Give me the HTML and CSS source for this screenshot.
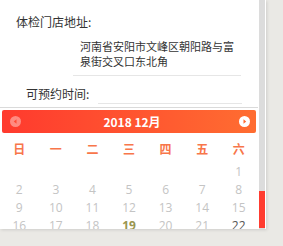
FILE: index.html
```html
<!DOCTYPE html>
<html lang="zh-CN">
<head>
<meta charset="utf-8">
<link rel="stylesheet" href="styles.css">
</head>
<body>
<div class="frame">
  <div class="content">
    <div class="label first">体检门店地址:</div>
    <div class="address">河南省安阳市文峰区朝阳路与富泉街交叉口东北角</div>
    <div class="sep sep1"></div>
    <div class="label second">可预约时间:</div>
    <div class="sep sep2"></div>
    <div class="calendar">
      <div class="cal-head">
        <span class="arrow prev"><svg width="11" height="11" viewBox="0 0 11 11"><circle cx="5.5" cy="5.5" r="5.5" fill="rgba(255,255,255,0.4)"/><path d="M6.5 3.2 L3.8 5.5 L6.5 7.8 Z" fill="#ff4a35"/></svg></span>
        <span class="title">2018 12月</span>
        <span class="arrow next"><svg width="11" height="11" viewBox="0 0 11 11"><circle cx="5.5" cy="5.5" r="5.5" fill="#fff"/><path d="M4.5 3.2 L7.2 5.5 L4.5 7.8 Z" fill="#ff6a30"/></svg></span>
      </div>
      <div class="week">
        <span>日</span><span>一</span><span>二</span><span>三</span><span>四</span><span>五</span><span>六</span>
      </div>
      <div class="days">
        <span></span><span></span><span></span><span></span><span></span><span></span><span>1</span>
        <span>2</span><span>3</span><span>4</span><span>5</span><span>6</span><span>7</span><span>8</span>
        <span>9</span><span>10</span><span>11</span><span>12</span><span>13</span><span>14</span><span>15</span>
        <span>16</span><span>17</span><span>18</span><span class="today">19</span><span>20</span><span>21</span><span class="avail">22</span>
      </div>
    </div>
  </div>
  <div class="scrollbar"><div class="thumb"></div></div>
</div>
</body>
</html>
```
FILE: styles.css
```css
html, body {
  margin: 0;
  padding: 0;
}
body {
  background: #eae9e5;
  width: 283px;
  height: 246px;
  overflow: hidden;
  font-family: "Noto Sans", "Noto Sans CJK SC", sans-serif;
  color: #333;
}
.frame {
  display: flex;
  width: 266px;
  height: 229px;
  background: #fff;
  box-shadow: 1px 1px 3px rgba(0,0,0,0.12);
  overflow: hidden;
}
.content {
  width: 258px;
  flex: none;
  overflow: hidden;
}
.scrollbar {
  width: 6px;
  margin-left: 1px;
  background: #dcdcdc;
  display: flex;
  flex-direction: column;
  justify-content: flex-end;
  padding-bottom: 1px;
}
.thumb {
  height: 37px;
  background: #ff3c30;
}
.label {
  font-size: 12px;
  line-height: 16px;
  height: 16px;
  font-family: "Noto Sans CJK SC", sans-serif;
  color: #333;
}
.label.first {
  margin-top: 14px;
  margin-left: 16px;
}
.address {
  margin-top: 9px;
  margin-left: 80px;
  width: 160px;
  font-size: 11px;
  line-height: 15px;
  font-family: "Noto Sans CJK SC", sans-serif;
  color: #333;
}
.sep {
  height: 1px;
  background: #e6e6e6;
}
.sep1 {
  margin-top: 6px;
  margin-left: 73px;
  width: 168px;
}
.label.second {
  margin-top: 10px;
  margin-left: 26px;
}
.sep2 {
  margin-top: 1px;
  margin-left: 98px;
  width: 144px;
}
.calendar {
  margin-top: 3px;
  border-top: 1px solid #dadada;
  padding: 2px 1px 0;
}
.cal-head {
  margin: 0 1px;
  height: 23px;
  border-radius: 2px;
  background: linear-gradient(to right, #ff3a2e, #ff6d31);
  display: flex;
  align-items: center;
  justify-content: space-between;
  padding: 0 6px 0 8px;
}
.arrow {
  display: flex;
  width: 11px;
  height: 11px;
}
.title {
  color: #fff;
  font-weight: bold;
  font-size: 12px;
  font-family: "Noto Sans CJK SC", sans-serif;
  margin-left: 4px;
}
.week, .days {
  display: grid;
  grid-template-columns: repeat(7, 1fr);
  text-align: center;
}
.week {
  margin-top: 7px;
  height: 18px;
  line-height: 18px;
  font-size: 12px;
  font-weight: bold;
  color: #f8764a;
  font-family: "Noto Sans CJK SC", sans-serif;
}
.days {
  margin-top: 5px;
  grid-auto-rows: 18px;
  line-height: 18px;
  font-size: 12px;
  color: #c4c4c4;
  font-family: "Open Sans", "Noto Sans", sans-serif;
}
.days .today {
  color: #9a9650;
  font-weight: bold;
}
.days .avail {
  color: #555;
}
```
